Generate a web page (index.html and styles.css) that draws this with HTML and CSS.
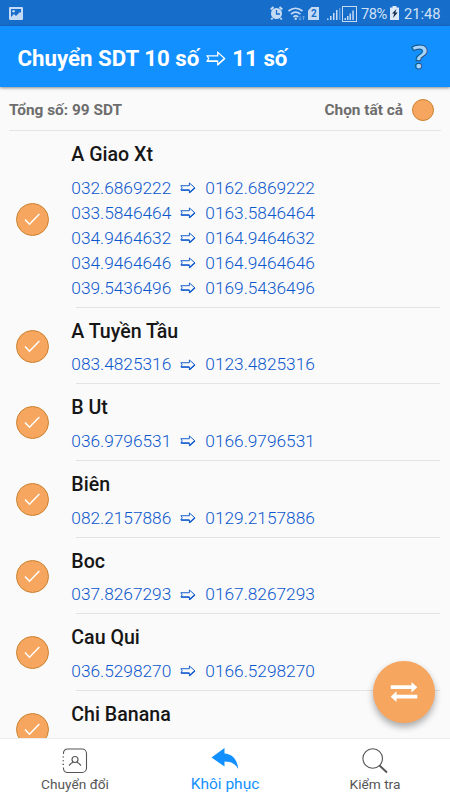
FILE: index.html
```html
<!DOCTYPE html>
<html lang="vi">
<head>
<meta charset="utf-8">
<title>Chuyển SDT</title>
<link rel="stylesheet" href="styles.css">
</head>
<body>
<svg class="defs" width="0" height="0" aria-hidden="true">
  <symbol id="check" viewBox="0 0 33 33"><path d="M8.500 16.500 13.300 21.500 23.800 10.700" fill="none" stroke="#fff" stroke-width="1.6"/></symbol>
  <symbol id="arrow" viewBox="0 0 15 11"><path d="M.8 3.500H8.800V.9L14 5.500 8.800 10.100V7.500H.8L2 5.500z" fill="none" stroke="currentColor" stroke-width=".9"/><path d="M1 7.600h7.800M8.800 10.200 14 5.500" fill="none" stroke="currentColor" stroke-width="1.200"/></symbol>
</svg>
<div class="app">
  <div class="status">
    <svg class="s-pic" width="14" height="13" viewBox="0 0 14 13"><path fill="#c5dbf5" fill-rule="evenodd" d="M1 0h12a1 1 0 0 1 1 1v11a1 1 0 0 1-1 1H1a1 1 0 0 1-1-1V1a1 1 0 0 1 1-1ZM2 2v8l3-3 2 2 4-4 1 1V2Z"/><circle cx="4.6" cy="4.2" r="1.3" fill="#c5dbf5"/></svg>
    <svg class="s-icons" width="88" height="18" viewBox="0 0 88 18" fill="#c5dbf5">
      <circle cx="6.500" cy="9.500" r="5.500"/><path d="M.8 5.500 3.500 3M12.200 5.500 9.500 3M2.500 14 1.300 15.500M10.500 14l1.200 1.500" stroke="#c5dbf5" stroke-width="2"/><path d="M6.500 6v4H10" fill="none" stroke="#176dca" stroke-width="1.3"/>
      <g fill="none" stroke="#c5dbf5" stroke-width="1.6"><path d="M18.500 7q7-5.500 14 0M21 10.200q4.700-4 9.400 0M23.300 12.900q2.500-2 5 0"/></g><circle cx="25.700" cy="14.800" r="1.200"/>
      <path d="M30 12v4m-1.300-1.500L30 16l1.300-1.500M33.500 16v-4m-1.300 1.500 1.300-1.500 1.300 1.500" fill="none" stroke="#79aae4" stroke-width=".8"/>
      <path d="M41.500 3H49v13H38V6.500Z"/><text x="43.500" y="13.200" class="sim">2</text>
      <path d="M57 14.500h1.500V16H57zM60 12h1.500v4H60zM63 9h1.500v7H63zM66 6h1.500v10H66z"/><path d="M69 4h1.500v12H69z" opacity=".4"/>
      <rect x="72.500" y="2.500" width="14" height="15" fill="none" stroke="#c5dbf5"/><path d="M74.500 14H76v2h-1.500zM77 12h1.500v4H77zM79.500 9.500H81V16h-1.500zM82.300 6.500h1.500V16h-1.500z"/>
    </svg>
    <span class="pct">78%</span>
    <svg class="s-bat" width="9" height="14" viewBox="0 0 9 14"><path fill="#dce9f9" d="M2.500 0h4v1.500H9V14H0V1.500h2.500z"/><path fill="#142c4d" d="M6.500 3 2 7.600h2.200L3 12l4.700-5.500H5.300z"/></svg>
    <span class="clock">21:48</span>
  </div>
  <header class="bar"><h1>Chuyển SDT 10 số <svg class="arr"><use href="#arrow"/></svg> 11 số</h1><span class="help">?</span></header>
  <div class="summary"><span>Tổng số: 99 SDT</span><span class="all">Chọn tất cả<i class="dot"></i></span></div>
  <main class="list">
    <section class="row"><svg class="chk"><use href="#check"/></svg><div class="info"><h2>A Giao Xt</h2>
      <p>032.6869222<svg class="arr"><use href="#arrow"/></svg>0162.6869222</p>
      <p>033.5846464<svg class="arr"><use href="#arrow"/></svg>0163.5846464</p>
      <p>034.9464632<svg class="arr"><use href="#arrow"/></svg>0164.9464632</p>
      <p>034.9464646<svg class="arr"><use href="#arrow"/></svg>0164.9464646</p>
      <p>039.5436496<svg class="arr"><use href="#arrow"/></svg>0169.5436496</p></div></section>
    <section class="row"><svg class="chk"><use href="#check"/></svg><div class="info"><h2>A Tuyền Tầu</h2><p>083.4825316<svg class="arr"><use href="#arrow"/></svg>0123.4825316</p></div></section>
    <section class="row"><svg class="chk"><use href="#check"/></svg><div class="info"><h2>B Ut</h2><p>036.9796531<svg class="arr"><use href="#arrow"/></svg>0166.9796531</p></div></section>
    <section class="row"><svg class="chk"><use href="#check"/></svg><div class="info"><h2>Biên</h2><p>082.2157886<svg class="arr"><use href="#arrow"/></svg>0129.2157886</p></div></section>
    <section class="row"><svg class="chk"><use href="#check"/></svg><div class="info"><h2>Boc</h2><p>037.8267293<svg class="arr"><use href="#arrow"/></svg>0167.8267293</p></div></section>
    <section class="row"><svg class="chk"><use href="#check"/></svg><div class="info"><h2>Cau Qui</h2><p>036.5298270<svg class="arr"><use href="#arrow"/></svg>0166.5298270</p></div></section>
    <section class="row"><svg class="chk"><use href="#check"/></svg><div class="info"><h2>Chi Banana</h2></div></section>
  </main>
  <nav class="tabs">
    <a class="tab"><svg width="26" height="26" viewBox="0 0 26 26" fill="none" stroke="#555" stroke-width="1.100"><path d="M1.500 6V5a4 4 0 0 1 4-4H20a4.500 4.500 0 0 1 4.500 4.500V20a4.500 4.500 0 0 1-4.500 4.500H5.500a4 4 0 0 1-4-4v-1M.5 9H2M.5 12.700H2M.5 16.400H2"/><circle cx="13" cy="11.500" r="3"/><path d="M7 17.700c1.500-2 3-3.200 4.200-3.500M19 17.700c-1.500-2-3-3.200-4.200-3.500"/></svg><span>Chuyển đổi</span></a>
    <a class="tab on"><svg width="28" height="26" viewBox="0 0 28 26"><path fill="#1290ff" d="M.5 9.500 13.500 0v5.500C21.500 6 26.500 12 27.200 21 24 15.500 20 13.500 13.500 13.500V18.500z"/></svg><span>Khôi phục</span></a>
    <a class="tab"><svg width="26" height="26" viewBox="0 0 26 26" fill="none" stroke="#555"><circle cx="10.700" cy="10.500" r="9.800" stroke-width="1.100"/><path d="m17.500 17.500 7.500 7" stroke-width="1.900"/></svg><span>Kiểm tra</span></a>
  </nav>
  <button class="fab"><svg width="28" height="20" viewBox="0 0 28 20" fill="#fff"><path d="M.7 3.300h20.800V0L27.300 5.200l-5.800 5.300V7.100H.7zM27.300 12.700H6.500V9.300L.7 14.700l5.800 5.300v-3.500h20.800z"/></svg></button>
</div>
</body>
</html>
```
FILE: styles.css
```css
* { box-sizing: border-box; }
body { margin: 0; font-family: Roboto, "DejaVu Sans", sans-serif; background: #fafafa; }
h1, h2, p { margin: 0; }
.defs { position: absolute; }
.app { position: relative; width: 450px; height: 800px; display: flex; flex-direction: column; overflow: hidden; }
.status { flex: none; height: 26px; background: #176dca; display: flex; align-items: center; padding-left: 9px; color: #d0e1f6; font-size: 14.700px; }
.s-icons { flex: none; margin-left: 247px; }
.sim { font: bold 10px Roboto, sans-serif; fill: #176dca; transform: translateX(-2.500px); }
.pct { width: 25px; margin: 2px 4px 0 3px; white-space: nowrap; letter-spacing: -.5px; }
.s-bat { flex: none; }
.clock { margin: 2px 0 0 5px; }
.bar { flex: none; position: relative; height: 61px; background: #1290ff; color: #fff; display: flex; align-items: center; justify-content: space-between; padding: 2px 22px 0 17.500px; box-shadow: 0 1px 3px rgba(0,0,0,.45); }
h1 { font-size: 22.250px; font-weight: 700; line-height: 30px; white-space: nowrap; }
.arr { width: 16px; height: 11.700px; margin: 0 9px; vertical-align: 0; }
h1 .arr { width: 20px; height: 15px; margin: 0 1px; }
.help { font: bold 34px/40px "Open Sans", sans-serif; color: #a6d5ff; -webkit-text-stroke: 1px #16527f; margin-top: -3px; }
.summary { flex: none; height: 44px; margin: 0 9px; border-bottom: 1px solid #e6e6e6; display: flex; align-items: center; justify-content: space-between; font-size: 15.400px; font-weight: 700; color: #6d6d6d; padding: 2px 7px 0 0; }
.all { display: flex; align-items: center; gap: 9px; }
.dot { width: 22px; height: 22px; border-radius: 50%; background: #f7a660; border: 1px solid #c9822f; }
.list { flex: 1; min-height: 0; overflow: hidden; }
.row { display: flex; align-items: center; min-height: 76.700px; padding: 0 10px 0 16px; }
.chk { flex: none; width: 33px; height: 33px; border-radius: 50%; background: #f7a660; border: 1px solid #c9822f; }
.info { position: relative; flex: 1; align-self: stretch; margin-left: 22.300px; padding: 11px 0 7.200px; }
.info::after { content: ""; position: absolute; left: 5px; right: 0; bottom: 0; height: 1px; background: #e3e3e3; }
h2 { font-size: 19.600px; font-weight: 500; line-height: 26px; height: 33.500px; color: #161616; }
p { font-size: 17.300px; font-weight: 300; line-height: 25px; height: 25px; color: #0b57cc; white-space: nowrap; }
.tabs { flex: none; height: 62px; background: #fff; border-top: 1px solid #ececec; display: flex; }
.tab { flex: 1; display: flex; flex-direction: column; align-items: center; padding-top: 9px; font-size: 13.700px; line-height: 18px; color: #555; }
.tab span { margin-top: 1px; }
.on { color: #1290ff; font-size: 15.500px; }
.fab { position: absolute; left: 372.500px; top: 661px; width: 62px; height: 62px; border: 0; border-radius: 50%; background: #f7a660; display: flex; align-items: center; justify-content: center; box-shadow: 0 4px 7px rgba(0,0,0,.32); }
```
